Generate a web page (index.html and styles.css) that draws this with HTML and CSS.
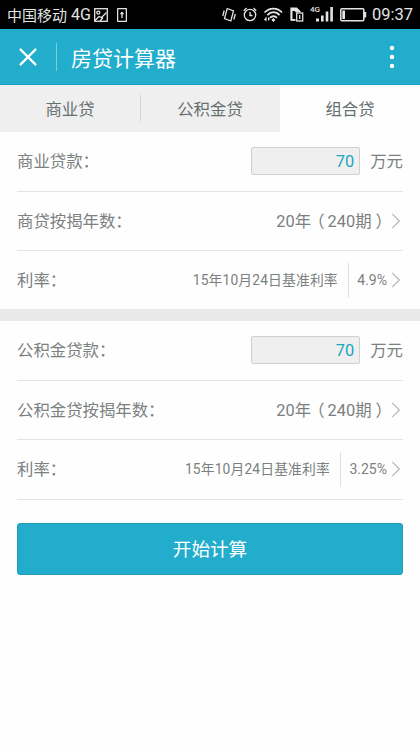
FILE: index.html
```html
<!DOCTYPE html>
<html lang="zh-CN">
<head>
<meta charset="utf-8">
<title>房贷计算器</title>
<link rel="stylesheet" href="styles.css">
</head>
<body>
<div class="status">
  <span class="carrier">中国移动</span><span class="net">4G</span>
  <svg class="pic" width="14" height="14" viewBox="0 0 14 14"><rect x=".7" y=".7" width="12.6" height="12.6"/><circle cx="4.3" cy="4.6" r="1.5"/><path d="M1 12.5L5 8.5L7.5 9.5L12.5 4.5M6 13L9 9.5"/></svg>
  <svg class="card" width="10" height="14" viewBox="0 0 10 14"><rect x=".6" y=".6" width="8.8" height="12.8" rx=".5"/><path d="M5 10V4.5M3.5 6L5 4.5L6.5 6"/></svg>
  <svg class="vibrate" width="14" height="16" viewBox="0 0 14 16"><path d="M5.2 1.5L11.5 3.8L8.8 14L2.5 11.7Z"/><path d="M2.2 3.5L.8 9M13.3 7L11.8 12.5"/></svg>
  <svg class="alarm" width="14" height="15" viewBox="0 0 14 15"><circle cx="7" cy="8" r="5.7"/><path d="M7 5V8.5H9.5M.8 3.8L3.5 1M13.2 3.8L10.5 1"/></svg>
  <svg class="wifi" width="20" height="15" viewBox="0 0 20 15"><path d="M1.5 5.5C6.5 .2 14.5 .2 19 5.5M4.3 8.2C8 4.2 13 4.2 16.5 8.2M7 10.8C9 8.7 12 8.7 14 10.8"/><path class="solid" d="M10.4 11L12.4 13L10.4 15L8.4 13ZM3.5 9.5V14.5L1 12.5ZM5 14V10L7 12Z"/></svg>
  <svg class="sim" width="14" height="15" viewBox="0 0 14 15"><path d="M5.5 13H1V1.2H6.5L10 4.5V5"/><path class="solid" d="M1 1H6.7L10.4 4.7V5.2H5.2V4H2.5V12H5.2V13.6H1Z"/><rect x="6.7" y="6" width="6" height="8"/><path d="M9.7 8V12"/></svg>
  <span class="cell"><span class="gen">4G</span><svg width="17" height="15" viewBox="0 0 17 15"><path class="solid" d="M0 11.5H3V14.5H0ZM5 8.5H7.6V14.5H5ZM9.7 4.5H12.3V14.5H9.7ZM14.3 0H16.9V14.5H14.3Z"/></svg></span>
  <svg class="battery" width="27" height="14" viewBox="0 0 27 14"><rect x=".8" y=".8" width="23" height="11.9" rx="1"/><path class="solid" d="M2.3 2.5H5V11H2.3ZM24 4H26.2V9.5H24Z"/></svg>
  <span class="time">09:37</span>
</div>
<header class="header">
  <svg class="close" width="18" height="18" viewBox="0 0 18 18"><path d="M.9 .9L17.1 17.1M17.1 .9L.9 17.1"/></svg>
  <h1 class="title">房贷计算器</h1>
  <svg class="more" width="6" height="24" viewBox="0 0 6 24"><circle cx="3" cy="3" r="2.2"/><circle cx="3" cy="12" r="2.2"/><circle cx="3" cy="21" r="2.2"/></svg>
</header>
<nav class="tabs">
  <div class="tab first">商业贷</div>
  <div class="tab">公积金贷</div>
  <div class="tab active">组合贷</div>
</nav>
<section class="group">
  <div class="row"><span class="label">商业贷款：</span><span class="amount">70</span><span class="unit">万元</span></div>
  <div class="row"><span class="label">商贷按揭年数：</span><span class="term">20年<span class="open">（</span>240期<span class="shut">）</span></span><svg class="chev" width="9" height="16" viewBox="0 0 9 16"><path d="M1.2 .8L8.3 8L1.2 15.2"/></svg></div>
  <div class="row"><span class="label">利率：</span><span class="basis">15年10月24日基准利率</span><span class="rate">4.9%</span><svg class="chev" width="9" height="16" viewBox="0 0 9 16"><path d="M1.2 .8L8.3 8L1.2 15.2"/></svg></div>
</section>
<div class="band"></div>
<section class="group last">
  <div class="row"><span class="label">公积金贷款：</span><span class="amount">70</span><span class="unit">万元</span></div>
  <div class="row"><span class="label">公积金贷按揭年数：</span><span class="term">20年<span class="open">（</span>240期<span class="shut">）</span></span><svg class="chev" width="9" height="16" viewBox="0 0 9 16"><path d="M1.2 .8L8.3 8L1.2 15.2"/></svg></div>
  <div class="row"><span class="label">利率：</span><span class="basis">15年10月24日基准利率</span><span class="rate">3.25%</span><svg class="chev" width="9" height="16" viewBox="0 0 9 16"><path d="M1.2 .8L8.3 8L1.2 15.2"/></svg></div>
</section>
<div class="submit">开始计算</div>
</body>
</html>
```
FILE: styles.css
```css
* { box-sizing: border-box; }
body {
  margin: 0;
  height: 747px;
  overflow: hidden;
  background: #fefefe;
  color: #7b8080;
  font-family: Roboto, "Noto Sans CJK SC", sans-serif;
  font-size: 16.4px;
}
svg { display: block; flex: none; fill: none; stroke: #e4e4e4; stroke-width: 1.3; }
.solid { fill: #e4e4e4; stroke: none; }
span { white-space: nowrap; }

.status {
  display: flex;
  align-items: center;
  height: 29px;
  padding-left: 7px;
  background: #000;
  color: #e4e4e4;
  font-size: 15px;
}
.carrier { width: 60px; padding-bottom: 1px; }
.net { width: 18px; margin-left: 4px; font-size: 16px; }
.pic { margin-left: 5px; }
.card { margin-left: 9px; }
.vibrate { margin-left: 95px; }
.alarm { margin-left: 7px; }
.wifi { margin-left: 6px; stroke-width: 1.8; }
.sim { margin-left: 7px; }
.cell { display: flex; align-items: flex-start; width: 23px; margin-left: 6px; }
.gen { width: 6px; margin-top: -2px; font-size: 8px; line-height: 9px; font-weight: 500; }
.battery { margin-left: 7px; stroke-width: 1.5; }
.time { margin-left: 5px; font-size: 16.5px; }

.header {
  display: flex;
  align-items: center;
  height: 56px;
  padding: 0 25px 0 19px;
  background: #22adcd;
  border-bottom: 1px solid #1ba0bf;
}
.close { stroke: #fff; stroke-width: 2.2; }
.title {
  display: flex;
  align-items: center;
  height: 28px;
  margin: 1px 0 0 19px;
  padding: 0 0 1px 14px;
  border-left: 1px solid #78cce0;
  color: #fff;
  font-size: 21px;
  font-weight: 400;
}
.more { margin-left: auto; fill: #fff; stroke: none; }

.tabs { display: flex; height: 47px; background: #efefef; color: #667070; }
.tab { display: flex; align-items: center; justify-content: center; flex: 1; padding-bottom: 1px; }
.first::after { content: ""; width: 1px; height: 26px; margin: 0 -46px 0 45px; background: #d4d4d4; }
.active { background: #fefefe; }

.group { padding: 0 17px; }
.row {
  display: flex;
  align-items: center;
  height: 59.5px;
  border-bottom: 1px solid #e4e4e4;
}
.group:not(.last) .row:last-child { height: 58px; border: 0; }
.label { margin-right: auto; }
.label, .term, .unit, .basis { padding-bottom: 2px; }
.term { margin-right: -1px; }
.open { margin: 0 3px 0 -3px; }
.shut { margin: 0 -4px 0 4px; }
.amount {
  width: 109px;
  height: 28px;
  padding-right: 5px;
  border: 1px solid #d0d0d0;
  border-radius: 2px;
  background: #efefef;
  color: #22a6bf;
  line-height: 28px;
  text-align: right;
}
.unit { margin-left: 10px; }
.chev { margin: 0 3px 0 4px; stroke: #b8b8b8; stroke-width: 1.2; }
.basis { font-size: 13.8px; letter-spacing: .15px; }
.rate {
  height: 35px;
  margin-left: 10px;
  padding-left: 8.5px;
  border-left: 1px solid #e0e0e0;
  font-size: 14px;
  line-height: 34px;
}
.band { height: 12px; background: #e9e9e9; }

.submit {
  display: flex;
  align-items: center;
  justify-content: center;
  height: 52px;
  margin: 23px 17px 0;
  padding-bottom: 2px;
  border: 1px solid #229bb5;
  border-radius: 3px;
  background: #22adcd;
  color: #fff;
  font-size: 18.6px;
}
```
